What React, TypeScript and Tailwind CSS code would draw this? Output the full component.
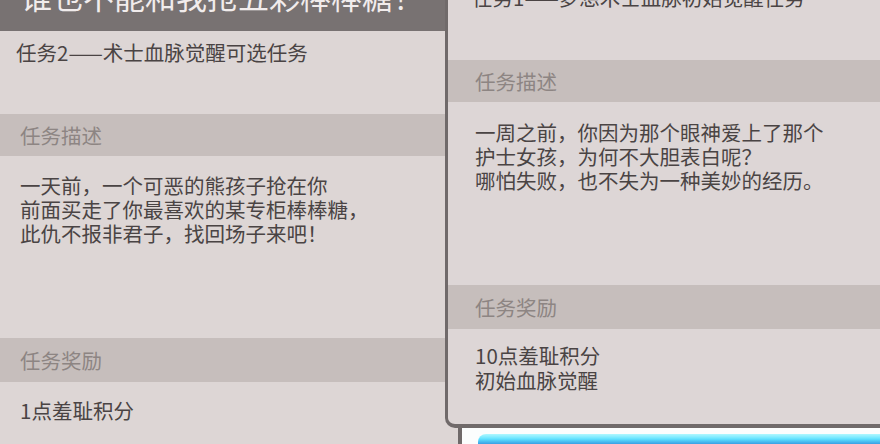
import React from "react";

const font = { fontFamily: '"Noto Sans CJK SC", "Noto Sans", sans-serif' };

const Band: React.FC<{ label: string; h: string; pl: string }> = ({ label, h, pl }) => (
  <div className={`flex items-center bg-[#c6bebc] text-[20.5px] text-[#8d8583] ${h} ${pl}`}>
    {label}
  </div>
);

export default function App() {
  return (
    <div style={font} className="flex h-[444px] w-[880px] overflow-hidden bg-[#ddd6d5] text-[#4a4444]">
      {/* left quest card */}
      <section className="flex w-[445px] shrink-0 flex-col">
        <div className="h-[31px] overflow-hidden bg-[#787272] pl-[21px]">
          <div className="-mt-[24px] whitespace-nowrap text-[31px] leading-[40px] text-[#f1ecec]">
            谁也不能和我抢五彩棒棒糖！
          </div>
        </div>
        <div className="h-[83px] pl-[16px] pt-[9px] text-[20.5px] leading-[24px]">任务2——术士血脉觉醒可选任务</div>
        <Band label="任务描述" h="h-[42px]" pl="pl-[20px]" />
        <div className="h-[182px] pl-[20px] pt-[17px] text-[20.5px] leading-[24px]">
          一天前，一个可恶的熊孩子抢在你
          <br />
          前面买走了你最喜欢的某专柜棒棒糖，
          <br />
          此仇不报非君子，找回场子来吧！
        </div>
        <Band label="任务奖励" h="h-[44px]" pl="pl-[20px]" />
        <div className="flex-1 pl-[20px] pt-[16px] text-[20.5px] leading-[24px]">1点羞耻积分</div>
      </section>

      {/* right quest card */}
      <div className="flex flex-1 flex-col">
        <section className="flex h-[428px] flex-col rounded-bl-[10px] border-b-[4px] border-l-[3px] border-[#706a6a] bg-[#ddd6d6]">
          <div className="h-[60px] overflow-hidden pl-[24px]">
            <div className="-mt-[15px] text-[20.5px] leading-[24px]">任务1——梦想术士血脉初始觉醒任务</div>
          </div>
          <Band label="任务描述" h="h-[42px]" pl="pl-[27px]" />
          <div className="h-[183px] pl-[27px] pt-[18px] text-[20.5px] leading-[24px]">
            一周之前，你因为那个眼神爱上了那个
            <br />
            护士女孩，为何不大胆表白呢？
            <br />
            哪怕失败，也不失为一种美妙的经历。
          </div>
          <Band label="任务奖励" h="h-[44px]" pl="pl-[27px]" />
          <div className="flex-1 pl-[27px] pt-[14px] text-[20.5px] leading-[25px]">
            10点羞耻积分
            <br />
            初始血脉觉醒
          </div>
        </section>
        <div className="flex h-[16px]">
          <div className="w-[13px] bg-[#ddd6d5]" />
          <div className="w-[4px] bg-[#6f6969]" />
          <div className="flex-1 bg-[#fbfdfd] pl-[16px] pt-[6px]">
            <div className="h-full rounded-tl-[8px] bg-gradient-to-b from-[#aef8ff] via-[#5fe2ff] to-[#3b9fe4]" />
          </div>
        </div>
      </div>
    </div>
  );
}
